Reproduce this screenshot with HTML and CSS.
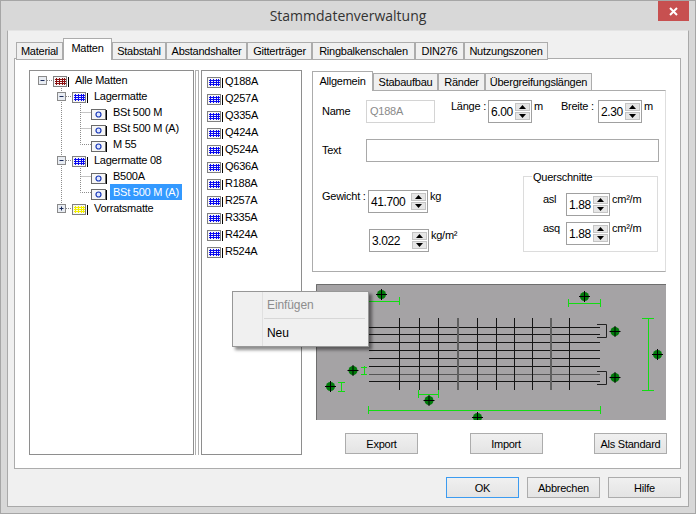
FILE: index.html
```html
<!DOCTYPE html>
<html lang="de">
<head>
    <meta charset="UTF-8">
    <meta name="viewport" content="width=device-width, initial-scale=1.0">
    <title>Stammdatenverwaltung</title>
    <link rel="stylesheet" href="styles.css">
</head>
<body>
    <svg class="defs" width="0" height="0">
        <symbol id="minus" viewBox="0 0 19 16">
            <path d="M13 8.5H19" class="dots"/>
            <rect x="4.5" y="4.5" width="8" height="8" class="box"/>
            <path d="M6.5 8.5H10.5" stroke="#1a2a5a"/>
        </symbol>
        <symbol id="minus-line" viewBox="0 0 19 16">
            <path d="M8.5 0V16M13 8.5H19" class="dots"/>
            <rect x="4.5" y="4.5" width="8" height="8" class="box"/>
            <path d="M6.5 8.5H10.5" stroke="#1a2a5a"/>
        </symbol>
        <symbol id="plus-end" viewBox="0 0 19 16">
            <path d="M8.5 0V5M13 8.5H19" class="dots"/>
            <rect x="4.5" y="4.5" width="8" height="8" class="box"/>
            <path d="M6.5 8.5H10.5M8.5 6.5V10.5" stroke="#1a2a5a"/>
        </symbol>
        <symbol id="guide" viewBox="0 0 19 16"><path d="M8.5 0V16" class="dots"/></symbol>
        <symbol id="elbow" viewBox="0 0 19 16"><path d="M8.5 0V16M8.5 8.5H19" class="dots"/></symbol>
        <symbol id="elbow-end" viewBox="0 0 19 16"><path d="M8.5 0V8.5H19" class="dots"/></symbol>
        <symbol id="mesh-red" viewBox="0 0 16 16">
            <rect x="0.5" y="4.5" width="13" height="10" fill="#f6f6f6" stroke="#808080"/>
            <path d="M2 7.5H13M2 9.5H13M2 11.5H13M3.5 6V13M6.5 6V13M9.5 6V13M11.5 6V13" stroke="#8a1010"/>
            <path d="M15.5 5V15" stroke="#000"/>
        </symbol>
        <symbol id="mesh-blue" viewBox="0 0 16 16">
            <rect x="0.5" y="4.5" width="13" height="10" fill="#f6f6f6" stroke="#808080"/>
            <path d="M2 7.5H13M2 9.5H13M2 11.5H13M3.5 6V13M6.5 6V13M9.5 6V13M11.5 6V13" stroke="#0a0af0"/>
            <path d="M15.5 5V15" stroke="#000"/>
        </symbol>
        <symbol id="mesh-yellow" viewBox="0 0 16 16">
            <rect x="0.5" y="4.5" width="13" height="10" fill="#f6f6f6" stroke="#808080"/>
            <path d="M2 7.5H13M2 9.5H13M2 11.5H13M3.5 6V13M6.5 6V13M9.5 6V13M11.5 6V13" stroke="#f4f000"/>
            <path d="M15.5 5V15" stroke="#000"/>
        </symbol>
        <symbol id="bar" viewBox="0 0 16 16">
            <rect x="0.5" y="5.5" width="14" height="10" fill="#f6f6f6" stroke="#6a6a6a"/>
            <circle cx="7.5" cy="10.5" r="2.5" fill="#dfe6ff" stroke="#1a3ab8" stroke-width="1.2"/>
            <path d="M15.5 6V16" stroke="#000"/>
        </symbol>
        <symbol id="up" viewBox="0 0 7 4"><path d="M3.5 0L7 4H0Z"/></symbol>
        <symbol id="down" viewBox="0 0 7 4"><path d="M0 0H7L3.5 4Z"/></symbol>
    </svg>

    <div class="window">
        <div class="titlebar">
            <span></span>
            <div class="title">Stammdatenverwaltung</div>
            <div class="close">
                <svg width="9" height="9" viewBox="0 0 9 9"><path d="M1 1L8 8M8 1L1 8" stroke="#fff" stroke-width="2"/></svg>
            </div>
        </div>

        <div class="client">
            <div class="tab-buttons outer">
                <div class="tab-button">Material</div>
                <div class="tab-button active">Matten</div>
                <div class="tab-button">Stabstahl</div>
                <div class="tab-button">Abstandshalter</div>
                <div class="tab-button">Gitterträger</div>
                <div class="tab-button">Ringbalkenschalen</div>
                <div class="tab-button">DIN276</div>
                <div class="tab-button">Nutzungszonen</div>
            </div>

            <div class="tab">
                <div class="tree">
                    <div class="row"><svg class="cell"><use href="#minus"/></svg><svg class="icon"><use href="#mesh-red"/></svg><span class="node">Alle Matten</span></div>
                    <div class="row"><svg class="cell"></svg><svg class="cell"><use href="#minus-line"/></svg><svg class="icon"><use href="#mesh-blue"/></svg><span class="node">Lagermatte</span></div>
                    <div class="row"><svg class="cell"></svg><svg class="cell"><use href="#guide"/></svg><svg class="cell"><use href="#elbow"/></svg><svg class="icon"><use href="#bar"/></svg><span class="node">BSt 500 M</span></div>
                    <div class="row"><svg class="cell"></svg><svg class="cell"><use href="#guide"/></svg><svg class="cell"><use href="#elbow"/></svg><svg class="icon"><use href="#bar"/></svg><span class="node">BSt 500 M (A)</span></div>
                    <div class="row"><svg class="cell"></svg><svg class="cell"><use href="#guide"/></svg><svg class="cell"><use href="#elbow-end"/></svg><svg class="icon"><use href="#bar"/></svg><span class="node">M 55</span></div>
                    <div class="row"><svg class="cell"></svg><svg class="cell"><use href="#minus-line"/></svg><svg class="icon"><use href="#mesh-blue"/></svg><span class="node">Lagermatte 08</span></div>
                    <div class="row"><svg class="cell"></svg><svg class="cell"><use href="#guide"/></svg><svg class="cell"><use href="#elbow"/></svg><svg class="icon"><use href="#bar"/></svg><span class="node">B500A</span></div>
                    <div class="row"><svg class="cell"></svg><svg class="cell"><use href="#guide"/></svg><svg class="cell"><use href="#elbow-end"/></svg><svg class="icon"><use href="#bar"/></svg><span class="node selected">BSt 500 M (A)</span></div>
                    <div class="row"><svg class="cell"></svg><svg class="cell"><use href="#plus-end"/></svg><svg class="icon"><use href="#mesh-yellow"/></svg><span class="node">Vorratsmatte</span></div>
                </div>

                <div class="splitter"></div>

                <div class="list">
                    <div class="list-item"><svg class="icon"><use href="#mesh-blue"/></svg>Q188A</div>
                    <div class="list-item"><svg class="icon"><use href="#mesh-blue"/></svg>Q257A</div>
                    <div class="list-item"><svg class="icon"><use href="#mesh-blue"/></svg>Q335A</div>
                    <div class="list-item"><svg class="icon"><use href="#mesh-blue"/></svg>Q424A</div>
                    <div class="list-item"><svg class="icon"><use href="#mesh-blue"/></svg>Q524A</div>
                    <div class="list-item"><svg class="icon"><use href="#mesh-blue"/></svg>Q636A</div>
                    <div class="list-item"><svg class="icon"><use href="#mesh-blue"/></svg>R188A</div>
                    <div class="list-item"><svg class="icon"><use href="#mesh-blue"/></svg>R257A</div>
                    <div class="list-item"><svg class="icon"><use href="#mesh-blue"/></svg>R335A</div>
                    <div class="list-item"><svg class="icon"><use href="#mesh-blue"/></svg>R424A</div>
                    <div class="list-item"><svg class="icon"><use href="#mesh-blue"/></svg>R524A</div>
                </div>

                <div class="detail">
                    <div class="tab-buttons inner">
                        <div class="tab-button active">Allgemein</div>
                        <div class="tab-button">Stabaufbau</div>
                        <div class="tab-button">Ränder</div>
                        <div class="tab-button">Übergreifungslängen</div>
                    </div>

                    <div class="form">
                        <div class="form-row">
                            <div class="label tall name-label">Name</div>
                            <div class="input name-input">Q188A</div>
                            <div class="label length-label">Länge :</div>
                            <div class="spin short">
                                <span class="num">6.00</span>
                                <div class="spin-btns"><div class="spin-btn"><svg width="7" height="4"><use href="#up"/></svg></div><div class="spin-btn"><svg width="7" height="4"><use href="#down"/></svg></div></div>
                            </div>
                            <div class="label unit unit-m">m</div>
                            <div class="label width-label">Breite :</div>
                            <div class="spin short">
                                <span class="num">2.30</span>
                                <div class="spin-btns"><div class="spin-btn"><svg width="7" height="4"><use href="#up"/></svg></div><div class="spin-btn"><svg width="7" height="4"><use href="#down"/></svg></div></div>
                            </div>
                            <div class="label unit">m</div>
                        </div>

                        <div class="form-row text-row">
                            <div class="label tall name-label">Text</div>
                            <div class="input text-input"></div>
                        </div>

                        <div class="form-row weight-row">
                            <div class="weights">
                                <div class="form-row gewicht">
                                    <div class="label gewicht-label">Gewicht :</div>
                                    <div class="spin wide">
                                        <span class="num">41.700</span>
                                        <div class="spin-btns"><div class="spin-btn"><svg width="7" height="4"><use href="#up"/></svg></div><div class="spin-btn"><svg width="7" height="4"><use href="#down"/></svg></div></div>
                                    </div>
                                    <div class="label unit">kg</div>
                                </div>
                                <div class="form-row gewicht-m2">
                                    <div class="spin wide">
                                        <span class="num">3.022</span>
                                        <div class="spin-btns"><div class="spin-btn"><svg width="7" height="4"><use href="#up"/></svg></div><div class="spin-btn"><svg width="7" height="4"><use href="#down"/></svg></div></div>
                                    </div>
                                    <div class="label unit">kg/m²</div>
                                </div>
                            </div>

                            <div class="group">
                                <span class="group-title">Querschnitte</span>
                                <div class="form-row">
                                    <div class="label group-label">asl</div>
                                    <div class="spin short">
                                        <span class="num">1.88</span>
                                        <div class="spin-btns"><div class="spin-btn"><svg width="7" height="4"><use href="#up"/></svg></div><div class="spin-btn"><svg width="7" height="4"><use href="#down"/></svg></div></div>
                                    </div>
                                    <div class="label unit">cm²/m</div>
                                </div>
                                <div class="form-row group-row">
                                    <div class="label group-label">asq</div>
                                    <div class="spin short">
                                        <span class="num">1.88</span>
                                        <div class="spin-btns"><div class="spin-btn"><svg width="7" height="4"><use href="#up"/></svg></div><div class="spin-btn"><svg width="7" height="4"><use href="#down"/></svg></div></div>
                                    </div>
                                    <div class="label unit">cm²/m</div>
                                </div>
                            </div>
                        </div>
                    </div>

                    <svg class="drawing" width="351" height="139" viewBox="316 284 351 139">
                        <defs>
                            <g id="marker">
                                <circle r="4.5" fill="#007a0a"/>
                                <path d="M-5.5 0H5.5M0 -5.5V5.5" stroke="#000"/>
                            </g>
                        </defs>
                        <rect x="316" y="284" width="350" height="136" fill="#a5a3a5"/>
                        <path d="M316.5 420V284.5H666" fill="none" stroke="#6e6e6e"/>
                        <!-- Staebe -->
                        <path d="M369 327.5H600M369 334.5H600M369 342.5H600M369 350.5H600M369 358.5H600M369 366.5H600M369 381.5H600" stroke="#141414"/>
                        <path d="M369 374.5H600" stroke="#555"/>
                        <path d="M399.5 318V390M419.5 318V390M438.5 318V390M477.5 318V390M496.5 318V390M514.5 318V390M532.5 318V390M569.5 318V390" stroke="#141414"/>
                        <path d="M458 318V390M551 318V390" stroke="#606060" stroke-width="2"/>
                        <path d="M597 324.5H606.5V337.5H597M597 371.5H606.5V384.5H597" fill="none" stroke="#222"/>
                        <!-- Masslinien -->
                        <path d="M357 301.5H400M399.5 297V305M568.5 299V307M568 303.5H601M600.5 299V307M642 318.5H654M648.5 318V390M642 390.5H654M364.5 366V375M361 367.5H367M361 374.5H367M341.5 382V392M338 382.5H345M338 391.5H345M418.5 390V398M418 394.5H439M438.5 390V398M368.5 406V414M368 410.5H601M600.5 406V414" fill="none" stroke="#12dc12"/>
                        <use href="#marker" x="381.5" y="294.5"/>
                        <use href="#marker" x="584.5" y="296.5"/>
                        <use href="#marker" x="615" y="331.5"/>
                        <use href="#marker" x="615" y="377.5"/>
                        <use href="#marker" x="657.5" y="354.5"/>
                        <use href="#marker" x="353" y="370.5"/>
                        <use href="#marker" x="330.5" y="386.5"/>
                        <use href="#marker" x="429" y="400.5"/>
                        <svg x="316" y="284" width="350" height="136" viewBox="316 284 350 136"><use href="#marker" x="477.5" y="417.5"/></svg>
                    </svg>

                    <div class="drawing-buttons">
                        <button class="btn">Export</button>
                        <button class="btn">Import</button>
                        <button class="btn">Als Standard</button>
                    </div>
                </div>
            </div>

            <div class="footer">
                <button class="btn default">OK</button>
                <button class="btn">Abbrechen</button>
                <button class="btn">Hilfe</button>
            </div>
        </div>

        <div class="menu">
            <div class="menu-item disabled">Einfügen</div>
            <div class="menu-sep"></div>
            <div class="menu-item">Neu</div>
        </div>
    </div>
</body>
</html>
```

FILE: styles.css
```css
body {
    margin: 0;
    font-family: "Liberation Sans", Arial, sans-serif;
    font-size: 11px;
    letter-spacing: -0.25px;
    color: #000;
    overflow: hidden;
}

.defs {
    display: block;
    height: 0;
}

.dots {
    fill: none;
    stroke: #8c8c8c;
    stroke-dasharray: 1 1;
}

.box {
    fill: #e8ecf2;
    stroke: #8a8a8a;
}

.window {
    position: relative;
    width: 696px;
    height: 514px;
    box-sizing: border-box;
    padding: 0 6px 6px 6px;
    display: flex;
    flex-direction: column;
    background-color: #d8d8d8;
    border: 1px solid #a6a6a6;
}

.titlebar {
    height: 29px;
    flex: none;
    display: grid;
    grid-template-columns: 1fr auto 1fr;
}

.title {
    font-family: "Open Sans", sans-serif;
    font-size: 14px;
    letter-spacing: 0;
    line-height: 30px;
    color: #333;
}

.close {
    justify-self: end;
    width: 31px;
    height: 20px;
    display: flex;
    align-items: center;
    justify-content: center;
    background-color: #c75050;
}

.client {
    flex: 1;
    display: flex;
    flex-direction: column;
    padding: 7px 7px 0 6px;
    background-color: #f0f0f0;
    border: 1px solid #a9a9a9;
    border-top-color: #e4e4e4;
}

.tab-buttons {
    display: grid;
    align-items: end;
}

.tab-buttons.outer {
    height: 20px;
    padding-left: 2px;
    grid-template-columns: 47px 49px 54px 81px 65px 103px 49px 84px;
}

.tab-buttons.inner {
    height: 19px;
    grid-template-columns: 61px 65px 47px 107px;
}

.tab-button {
    position: relative;
    box-sizing: border-box;
    height: 18px;
    line-height: 17px;
    margin-bottom: -1px;
    text-align: center;
    background-color: #f0f0f0;
    border: 1px solid #acacac;
    white-space: nowrap;
}

.tab-button.active {
    z-index: 1;
    height: 22px;
    line-height: 18px;
    background-color: white;
    border-bottom: none;
}

.inner .tab-button.active {
    height: 20px;
}

.tab {
    display: flex;
    align-items: flex-start;
    height: 411px;
    box-sizing: border-box;
    padding: 11px 0 0 14px;
    background-color: white;
    border: 1px solid #acacac;
}

.tree, .list {
    height: 385px;
    box-sizing: border-box;
    border: 1px solid #8e8e8e;
    flex: none;
}

.tree {
    width: 165px;
    padding: 1px 0 0 4px;
}

.row {
    display: flex;
    height: 16px;
}

.cell {
    width: 19px;
    height: 16px;
    flex: none;
}

.icon {
    width: 16px;
    height: 16px;
    flex: none;
}

.node {
    margin-left: 3px;
    padding: 0 3px;
    line-height: 16px;
    white-space: nowrap;
}

.node.selected {
    background-color: #3399ff;
    color: white;
}

.splitter {
    width: 4px;
    height: 385px;
    flex: none;
    box-sizing: border-box;
    margin: 0 2px 0 1px;
    border-left: 1px solid #b0b0b0;
    border-right: 1px solid #b0b0b0;
    border-top: 1px solid #b0b0b0;
}

.list {
    width: 101px;
    padding: 1px 0 0 5px;
}

.list-item {
    display: flex;
    align-items: center;
    gap: 2px;
    height: 17px;
}

.detail {
    width: 355px;
    flex: none;
    margin: 1px 0 0 10px;
}

.form {
    box-sizing: border-box;
    width: 354px;
    height: 182px;
    padding: 9px 0 0 9px;
    border: 1px solid #acacac;
    border-right-color: #dedede;
}

.form-row {
    display: flex;
    align-items: flex-start;
}

.label {
    line-height: 13px;
    white-space: nowrap;
}

.label.tall {
    line-height: 23px;
}

.name-label {
    width: 44px;
}

.input {
    box-sizing: border-box;
    height: 23px;
    line-height: 21px;
    padding-left: 3px;
    border: 1px solid #a9a9a9;
}

.name-input {
    width: 69px;
    color: #8a8a8a;
    border-color: #d4d4d4;
}

.length-label {
    width: 37px;
    margin-left: 16px;
}

.unit {
    padding-left: 2px;
}

.unit-m {
    width: 27px;
}

.width-label {
    width: 37px;
}

.spin {
    display: flex;
    justify-content: space-between;
    box-sizing: border-box;
    height: 23px;
    padding: 1px 1px 1px 2px;
    border: 1px solid #a0a0a0;
}

.spin.short {
    width: 44px;
}

.spin.wide {
    width: 60px;
}

.num {
    font-size: 12px;
    letter-spacing: -0.4px;
    line-height: 20px;
}

.spin-btns {
    display: flex;
    flex-direction: column;
    justify-content: space-between;
    width: 15px;
    padding: 1px 0;
}

.spin-btn {
    box-sizing: border-box;
    height: 8px;
    display: flex;
    align-items: center;
    justify-content: center;
    background-color: #e6e6e6;
    border: 1px solid #c4c4c4;
}

.spin-btn svg {
    display: block;
}

.text-row {
    margin-top: 16px;
}

.text-input {
    width: 293px;
}

.weight-row {
    margin-top: 14px;
}

.weights {
    width: 201px;
    padding-top: 14px;
}

.gewicht-label {
    width: 46px;
}

.gewicht-m2 {
    margin: 16px 0 0 47px;
}

.group {
    position: relative;
    box-sizing: border-box;
    width: 135px;
    height: 76px;
    padding: 16px 0 0 19px;
    border: 1px solid #dcdcdc;
}

.group-title {
    position: absolute;
    top: -6px;
    left: 8px;
    padding: 0 1px;
    line-height: 13px;
    background-color: white;
}

.group-label {
    width: 23px;
}

.group-row {
    margin-top: 6px;
}

.drawing {
    display: block;
    margin: 12px 0 0 4px;
}

.drawing-buttons {
    display: flex;
    justify-content: space-between;
    margin: 10px 0 0 33px;
}

.btn {
    box-sizing: border-box;
    width: 73px;
    height: 21px;
    padding: 0;
    font: inherit;
    letter-spacing: inherit;
    color: #000;
    background-color: #e9e9e9;
    background-image: linear-gradient(#f0f0f0, #e4e4e4);
    border: 1px solid #acacac;
}

.btn.default {
    border-color: #3c9bf0;
}

.footer {
    display: flex;
    justify-content: flex-end;
    gap: 8px;
    margin-top: 8px;
}

.menu {
    position: absolute;
    left: 231px;
    top: 290px;
    width: 137px;
    height: 56px;
    box-sizing: border-box;
    padding: 4px 3px 0 2px;
    font-size: 12px;
    letter-spacing: -0.1px;
    background-color: #f0f0f0;
    background-image: linear-gradient(#e0e0e0, #e0e0e0);
    background-size: 1px 100%;
    background-position: 29px 0;
    background-repeat: no-repeat;
    border: 1px solid #979797;
    box-shadow: 3px 3px 3px rgba(0, 0, 0, 0.45);
}

.menu-item {
    height: 18px;
    line-height: 18px;
    padding-left: 32px;
}

.menu-item.disabled {
    color: #8d8d8d;
}

.menu-sep {
    height: 1px;
    margin: 4px 0 5px 29px;
    background-color: #d7d7d7;
}
```
